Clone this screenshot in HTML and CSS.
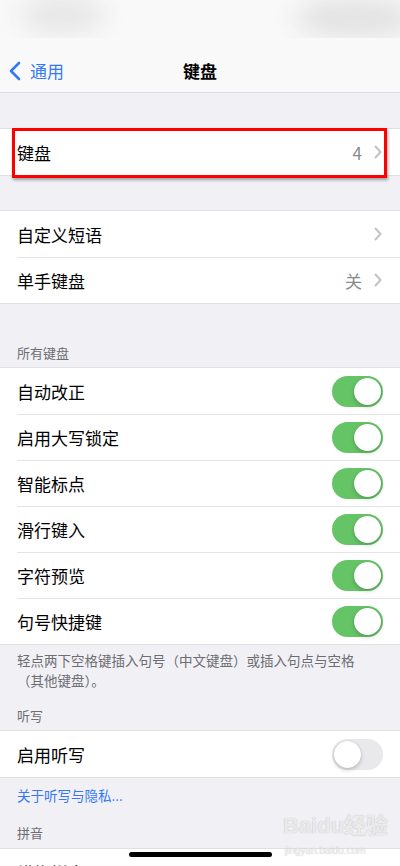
FILE: index.html
```html
<!DOCTYPE html>
<html lang="zh-CN">
<head>
    <meta charset="UTF-8">
    <meta name="viewport" content="width=device-width, initial-scale=1.0">
    <title>键盘</title>
    <link rel="stylesheet" href="styles.css">
</head>
<body>
    <div class="phone">
        <div class="status">
            <div class="blur blur-left"></div>
            <div class="blur blur-right"></div>
        </div>

        <div class="navbar">
            <div class="back">
                <svg width="12" height="20" viewBox="0 0 12 20">
                    <path d="M10 2 L2 10 L10 18" fill="none" stroke="#3478f6" stroke-width="2.6" stroke-linecap="round" stroke-linejoin="round"/>
                </svg>
                <span>通用</span>
            </div>
            <div class="title">键盘</div>
        </div>

        <div class="content">
            <div class="group">
                <div class="row">
                    <span class="label">键盘</span>
                    <span class="value">4</span>
                    <svg class="chev" width="8" height="14" viewBox="0 0 8 14"><path d="M1.5 1.5 L6.5 7 L1.5 12.5" fill="none" stroke="#c4c4c7" stroke-width="2" stroke-linecap="round" stroke-linejoin="round"/></svg>
                </div>
                <!-- highlight box drawn over the row -->
                <div class="highlight"></div>
            </div>

            <div class="group group-second">
                <div class="row">
                    <span class="label">自定义短语</span>
                    <svg class="chev" width="8" height="14" viewBox="0 0 8 14"><path d="M1.5 1.5 L6.5 7 L1.5 12.5" fill="none" stroke="#c4c4c7" stroke-width="2" stroke-linecap="round" stroke-linejoin="round"/></svg>
                </div>
                <div class="row">
                    <span class="label">单手键盘</span>
                    <span class="value">关</span>
                    <svg class="chev" width="8" height="14" viewBox="0 0 8 14"><path d="M1.5 1.5 L6.5 7 L1.5 12.5" fill="none" stroke="#c4c4c7" stroke-width="2" stroke-linecap="round" stroke-linejoin="round"/></svg>
                </div>
            </div>

            <div class="header header-all">所有键盘</div>
            <div class="group">
                <div class="row"><span class="label">自动改正</span><span class="toggle on"></span></div>
                <div class="row"><span class="label">启用大写锁定</span><span class="toggle on"></span></div>
                <div class="row"><span class="label">智能标点</span><span class="toggle on"></span></div>
                <div class="row"><span class="label">滑行键入</span><span class="toggle on"></span></div>
                <div class="row"><span class="label">字符预览</span><span class="toggle on"></span></div>
                <div class="row"><span class="label">句号快捷键</span><span class="toggle on"></span></div>
            </div>
            <div class="note">轻点两下空格键插入句号（中文键盘）或插入句点与空格（其他键盘）。</div>

            <div class="header header-dict">听写</div>
            <div class="group">
                <div class="row"><span class="label">启用听写</span><span class="toggle"></span></div>
            </div>
            <div class="link">关于听写与隐私...</div>

            <div class="header header-pinyin">拼音</div>
            <div class="group">
                <div class="row"><span class="label">模糊拼音</span></div>
            </div>
        </div>

        <div class="watermark">
            <span class="wm-big">Baidu经验</span>
            <span class="wm-small">jingyan.baidu.com</span>
        </div>
        <div class="home-bar"></div>
    </div>
</body>
</html>
```

FILE: styles.css
```css
* {
    box-sizing: border-box;
}

body {
    margin: 0;
    font-family: "Noto Sans CJK SC", "Noto Sans", sans-serif;
    background: #f0f0f5;
    color: #000;
}

.phone {
    position: relative;
    width: 400px;
    height: 866px;
    overflow: hidden;
    background: #f0f0f5;
}

.status {
    position: relative;
    height: 38px;
    background: #f9f9f9;
    overflow: hidden;
}

.blur {
    position: absolute;
    border-radius: 50%;
    background: #e6e6e6;
    filter: blur(12px);
}

.blur-left {
    left: 20px;
    top: -4px;
    width: 85px;
    height: 38px;
}

.blur-right {
    left: 295px;
    top: -2px;
    width: 120px;
    height: 40px;
    background: #e2e2e2;
}

.navbar {
    position: relative;
    height: 55px;
    background: #f9f9f9;
    border-bottom: 1px solid #dcdcdf;
    display: flex;
    justify-content: center;
    padding-top: 22px;
}

.back {
    position: absolute;
    left: 9px;
    top: 22px;
    display: flex;
    align-items: center;
    gap: 9px;
    color: #3478f6;
    font-size: 17px;
    line-height: 22px;
}

.title {
    font-size: 17px;
    font-weight: 700;
    line-height: 22px;
}

.content {
    padding-top: 36px;
}

.group {
    position: relative;
    background: #fff;
    box-shadow: 0 -1px 0 #e0e0e4, 0 1px 0 #e0e0e4;
}

.group-second {
    margin-top: 36px;
}

.row {
    position: relative;
    height: 46px;
    display: flex;
    align-items: center;
    padding: 0 18px 0 17px;
    font-size: 17px;
}

.row + .row::before {
    content: "";
    position: absolute;
    left: 17px;
    right: 0;
    top: 0;
    border-top: 1px solid #e4e4e8;
}

.label {
    flex: 1;
}

.value {
    color: #8a8a8e;
    margin-right: 12px;
}

.chev {
    display: block;
}

.highlight {
    position: absolute;
    left: 12px;
    right: 13px;
    top: -1px;
    height: 50px;
    border: 3px solid #ff0000;
    box-shadow: 1px 2px 3px rgba(0, 0, 0, 0.35);
}

.toggle {
    position: relative;
    width: 51px;
    height: 31px;
    border-radius: 16px;
    background: #e9e9eb;
    margin-right: -1px;
}

.toggle::after {
    content: "";
    position: absolute;
    top: 2px;
    left: 2px;
    width: 27px;
    height: 27px;
    border-radius: 50%;
    background: #fff;
    box-shadow: 0 2px 4px rgba(0, 0, 0, 0.2), 0 0 1px rgba(0, 0, 0, 0.2);
}

.toggle.on {
    background: #65c466;
}

.toggle.on::after {
    left: 22px;
}

.header {
    color: #6d6d72;
    font-size: 13px;
    line-height: 20px;
    padding: 0 17px 5px;
}

.header-all {
    padding-top: 40px;
}

.header-dict {
    padding-top: 16px;
}

.header-pinyin {
    padding-top: 18px;
    padding-bottom: 6px;
}

.note {
    color: #6d6d72;
    font-size: 13.5px;
    line-height: 20px;
    padding: 6px 30px 0 17px;
}

.link {
    color: #3478f6;
    font-size: 13.5px;
    line-height: 20px;
    padding: 8px 17px 0;
}

.watermark {
    position: absolute;
    left: 283px;
    top: 812px;
    display: flex;
    flex-direction: column;
    align-items: flex-start;
    white-space: nowrap;
    color: rgba(255, 255, 255, 0.75);
    text-shadow: 0 0 1px rgba(0, 0, 0, 0.3);
    font-family: "Liberation Sans", "Noto Sans CJK SC", sans-serif;
}

.wm-big {
    font-size: 22px;
    font-weight: 700;
    line-height: 28px;
}

.wm-small {
    font-size: 10px;
    line-height: 14px;
    margin-left: 2px;
    margin-top: 4px;
}

.home-bar {
    position: absolute;
    left: 129px;
    top: 852px;
    width: 143px;
    height: 5px;
    border-radius: 3px;
    background: #000;
}
```
